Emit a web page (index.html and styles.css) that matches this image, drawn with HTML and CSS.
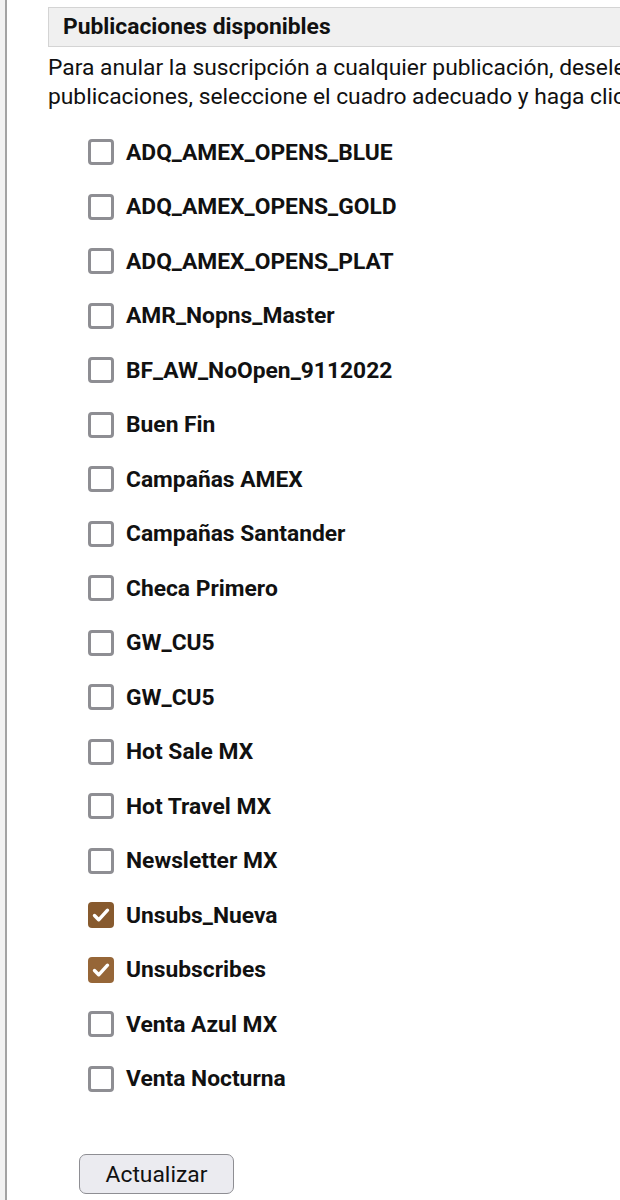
FILE: index.html
```html
<!DOCTYPE html>
<html lang="es">
  <head>
    <meta charset="UTF-8" />
    <meta name="viewport" content="width=device-width, initial-scale=1.0" />
    <title>Publicaciones</title>
    <link rel="stylesheet" href="styles.css">
  </head>
  <body>
    <div class="page">
      <div class="content">
        <h2 class="section-title">Publicaciones disponibles</h2>
        <p class="intro">
          Para anular la suscripción a cualquier publicación, deseleccione el cuadro adecuado. Para suscribirse a<br />
          publicaciones, seleccione el cuadro adecuado y haga clic en Actualizar.
        </p>

        <form class="pub-form">
          <ul class="pub-list">
            <li><label class="pub"><span class="box"></span>ADQ_AMEX_OPENS_BLUE</label></li>
            <li><label class="pub"><span class="box"></span>ADQ_AMEX_OPENS_GOLD</label></li>
            <li><label class="pub"><span class="box"></span>ADQ_AMEX_OPENS_PLAT</label></li>
            <li><label class="pub"><span class="box"></span>AMR_Nopns_Master</label></li>
            <li><label class="pub"><span class="box"></span>BF_AW_NoOpen_9112022</label></li>
            <li><label class="pub"><span class="box"></span>Buen Fin</label></li>
            <li><label class="pub"><span class="box"></span>Campañas AMEX</label></li>
            <li><label class="pub"><span class="box"></span>Campañas Santander</label></li>
            <li><label class="pub"><span class="box"></span>Checa Primero</label></li>
            <li><label class="pub"><span class="box"></span>GW_CU5</label></li>
            <li><label class="pub"><span class="box"></span>GW_CU5</label></li>
            <li><label class="pub"><span class="box"></span>Hot Sale MX</label></li>
            <li><label class="pub"><span class="box"></span>Hot Travel MX</label></li>
            <li><label class="pub"><span class="box"></span>Newsletter MX</label></li>
            <li>
              <label class="pub">
                <span class="box checked">
                  <svg viewBox="0 0 24 24" width="24" height="24"><path d="M5.5 12.5l4.2 4.3L18.5 7.2" fill="none" stroke="#fff" stroke-width="3.4" stroke-linecap="round" stroke-linejoin="round"/></svg>
                </span>Unsubs_Nueva
              </label>
            </li>
            <li>
              <label class="pub">
                <span class="box checked light">
                  <svg viewBox="0 0 24 24" width="24" height="24"><path d="M5.5 12.5l4.2 4.3L18.5 7.2" fill="none" stroke="#fff" stroke-width="3.4" stroke-linecap="round" stroke-linejoin="round"/></svg>
                </span>Unsubscribes
              </label>
            </li>
            <li><label class="pub"><span class="box"></span>Venta Azul MX</label></li>
            <li><label class="pub"><span class="box"></span>Venta Nocturna</label></li>
          </ul>

          <button type="button" class="update-btn">Actualizar</button>
        </form>
      </div>
    </div>
  </body>
</html>
```

FILE: styles.css
```css
html,
body {
  margin: 0;
  overflow: hidden;
}
body {
  background: #f2f2f2;
  font-family: Roboto, "Noto Sans", Arial, sans-serif;
  color: #111;
}
.page {
  margin-left: 5px;
  border-left: 2px solid #a3a3a3;
  background: white;
  min-height: 1200px;
}
.content {
  width: 1200px;
  padding: 7px 0 0 41px;
}
.section-title {
  margin: 0;
  height: 38px;
  line-height: 38px;
  padding-left: 14px;
  background: #f0f0f0;
  border: 1px solid #d4d4d4;
  border-right: none;
  font-size: 22.8px;
  font-weight: bold;
}
.intro {
  margin: 0;
  padding-top: 6px;
  font-size: 22.8px;
  line-height: 29px;
  white-space: nowrap;
}
.pub-list {
  list-style: none;
  margin: 0;
  padding: 14px 0 0 40px;
}
.pub-list li {
  height: 54.5px;
  display: flex;
  align-items: center;
}
.pub {
  display: flex;
  align-items: center;
  gap: 12px;
  font-size: 22.8px;
  font-weight: bold;
  cursor: pointer;
}
.box {
  width: 26px;
  height: 26px;
  box-sizing: border-box;
  border: 3px solid #8e8e93;
  border-radius: 4px;
  display: flex;
  align-items: center;
  justify-content: center;
}
.box.checked {
  border: none;
  background: #875a2e;
}
.box.checked.light {
  background: #966638;
}
.update-btn {
  margin: 48px 0 0 31px;
  width: 155px;
  height: 40px;
  background: #ebebf0;
  border: 1.5px solid #8e8e93;
  border-radius: 7px;
  font-family: Roboto, "Noto Sans", Arial, sans-serif;
  font-size: 22.8px;
  color: #111;
  cursor: pointer;
}
```
